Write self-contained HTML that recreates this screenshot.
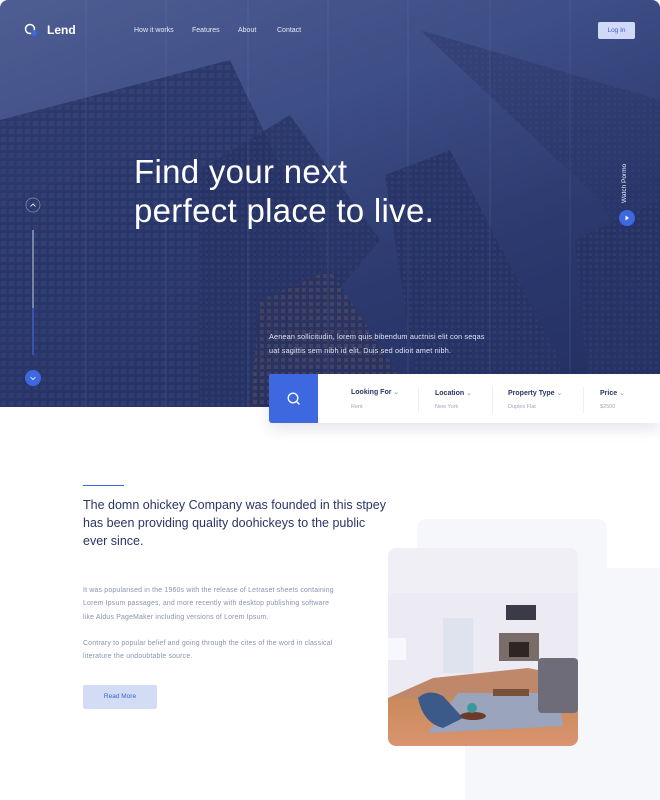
<!DOCTYPE html>
<html><head><meta charset="utf-8"><style>
*{margin:0;padding:0;box-sizing:border-box}
body{width:660px;height:800px;background:#fff;font-family:"Liberation Sans",sans-serif;position:relative;overflow:hidden}
.hero{position:absolute;left:0;top:0;width:660px;height:407px;background:linear-gradient(160deg,#5a6a9c 0%,#43538a 35%,#2c396c 65%,#1f2a58 100%);overflow:hidden;border-radius:8px 8px 0 0}
.abs{position:absolute}
.nav{color:#e6eaf7;font-size:7px;top:27px}
</style></head><body>
<div class="hero">
<svg class="abs" style="left:0;top:0" width="660" height="407">
<defs><pattern id="w" width="8" height="8" patternUnits="userSpaceOnUse"><rect width="8" height="8" fill="#26315f"/><rect x="1" y="1" width="5" height="5" fill="#303d70"/></pattern>
<pattern id="w2" width="6" height="6" patternUnits="userSpaceOnUse"><rect width="6" height="6" fill="#25305d"/><rect x="1" y="1" width="3" height="3" fill="#2f3c6e"/></pattern>
<pattern id="o" width="7" height="7" patternUnits="userSpaceOnUse"><rect width="7" height="7" fill="#2a2f55"/><rect x="1" y="1" width="4" height="4" fill="#5a4a5a"/></pattern></defs>
<polygon points="0,120 230,60 330,270 230,407 0,407" fill="url(#w)" opacity="0.85"/>
<polygon points="200,170 290,115 380,240 330,300 260,407 200,407" fill="url(#w2)" opacity="0.8"/>
<polygon points="385,175 450,150 560,360 560,407 420,407" fill="url(#w2)" opacity="0.85"/>
<polygon points="260,300 330,270 420,407 250,407" fill="url(#o)" opacity="0.7"/>
<polygon points="420,30 660,100 660,330 600,200" fill="url(#w2)" opacity="0.45"/>
<polygon points="575,240 660,200 660,407 590,407" fill="url(#w2)" opacity="0.8"/>
<rect width="660" height="407" fill="#2a3a78" opacity="0.25"/>
<g stroke="#8090c0" stroke-width="0.5" opacity="0.35"><line x1="166" y1="0" x2="166" y2="407"/><line x1="248" y1="0" x2="248" y2="407"/><line x1="328" y1="0" x2="328" y2="407"/><line x1="408" y1="0" x2="408" y2="407"/><line x1="490" y1="0" x2="490" y2="407"/><line x1="570" y1="0" x2="570" y2="407"/><line x1="86" y1="0" x2="86" y2="407"/></g>
<circle cx="30" cy="29" r="4.5" fill="none" stroke="#fff" stroke-width="1.5"/><circle cx="34" cy="33" r="3" fill="#3d68e0"/>
<circle cx="33" cy="205" r="7" fill="none" stroke="#7f8bb5" stroke-width="0.7"/><path d="M30.5 206.5 33 204 35.5 206.5" fill="none" stroke="#fff" stroke-width="0.8"/>
<line x1="33" y1="230" x2="33" y2="355" stroke="#c8cde0" stroke-width="1"/><line x1="33" y1="308" x2="33" y2="355" stroke="#3d68e0" stroke-width="1.2"/>
<circle cx="33" cy="378" r="8" fill="#3d68e0"/><path d="M30.5 377 33 379.5 35.5 377" fill="none" stroke="#fff" stroke-width="0.8"/>
<circle cx="627" cy="218" r="8" fill="#3d68e0"/><path d="M625.5 215.5 629 218 625.5 220.5Z" fill="#fff"/>
</svg>
<div class="abs" style="left:47px;top:23px;color:#fff;font-size:12px;font-weight:bold">Lend</div>
<div class="abs nav" style="left:134px">How it works</div>
<div class="abs nav" style="left:192px">Features</div>
<div class="abs nav" style="left:238px">About</div>
<div class="abs nav" style="left:277px">Contact</div>
<div class="abs" style="left:598px;top:22px;width:37px;height:17px;background:#d0d9f7;border-radius:2px;color:#3d5fd0;font-size:6.5px;text-align:center;line-height:17px">Log In</div>
<div class="abs" style="left:134px;top:152px;color:#fff;font-size:33px;line-height:39px;letter-spacing:0.3px">Find your next<br>perfect place to live.</div>
<div class="abs" style="left:621px;top:203px;color:#e6eaf7;font-size:6.5px;transform:rotate(-90deg);transform-origin:0 0;white-space:nowrap">Watch Pormo</div>
<div class="abs" style="left:269px;top:330px;color:#dfe3f2;font-size:7.3px;line-height:13.5px;letter-spacing:0.15px">Aenean sollicitudin, lorem quis bibendum auctnisi elit con seqas<br>uat sagittis sem nibh id elit. Duis sed odioit amet nibh.</div>
</div>
<div class="abs" style="left:269px;top:374px;width:391px;height:49px;background:#fff;box-shadow:0 6px 14px rgba(40,50,90,0.12);border-radius:3px 0 0 3px"></div>
<div class="abs" style="left:269px;top:374px;width:49px;height:49px;background:#3d68e0;border-radius:3px 0 0 3px"></div>
<svg class="abs" style="left:286px;top:391px" width="16" height="16"><circle cx="7" cy="7" r="4.8" fill="none" stroke="#fff" stroke-width="1.3"/><line x1="10.5" y1="10.5" x2="13.5" y2="13.5" stroke="#fff" stroke-width="1.3"/></svg>
<div class="abs" style="left:351px;top:388px;font-size:7px;color:#2a3566;font-weight:bold">Looking For <span style="color:#8a93b0;font-weight:normal">⌄</span></div>
<div class="abs" style="left:351px;top:404px;font-size:5.5px;color:#a0a7be">Rent</div>
<div class="abs" style="left:418px;top:387px;width:1px;height:26px;background:#eceef4"></div>
<div class="abs" style="left:435px;top:389px;font-size:7px;color:#2a3566;font-weight:bold">Location <span style="color:#8a93b0;font-weight:normal">⌄</span></div>
<div class="abs" style="left:435px;top:404px;font-size:5.5px;color:#a0a7be">New York</div>
<div class="abs" style="left:492px;top:387px;width:1px;height:26px;background:#eceef4"></div>
<div class="abs" style="left:508px;top:389px;font-size:7px;color:#2a3566;font-weight:bold">Property Type <span style="color:#8a93b0;font-weight:normal">⌄</span></div>
<div class="abs" style="left:508px;top:404px;font-size:5.5px;color:#a0a7be">Duplex Flat</div>
<div class="abs" style="left:583px;top:387px;width:1px;height:26px;background:#eceef4"></div>
<div class="abs" style="left:600px;top:389px;font-size:7px;color:#2a3566;font-weight:bold">Price <span style="color:#8a93b0;font-weight:normal">⌄</span></div>
<div class="abs" style="left:600px;top:404px;font-size:5.5px;color:#a0a7be">$2500</div>

<div class="abs" style="left:417px;top:519px;width:190px;height:120px;background:#f6f7fb;border-radius:10px 10px 0 0"></div>
<div class="abs" style="left:465px;top:568px;width:195px;height:232px;background:#f6f7fb;border-radius:40px 0 0 0"></div>
<svg class="abs" style="left:388px;top:548px;border-radius:8px" width="190" height="198">
<defs><linearGradient id="fl" x1="0" y1="0" x2="0" y2="1"><stop offset="0" stop-color="#c98a5a"/><stop offset="1" stop-color="#d99470"/></linearGradient></defs>
<rect width="190" height="198" fill="#eceaf2"/>
<rect y="0" width="190" height="45" fill="#f1eff6"/>
<rect x="0" y="150" width="190" height="48" fill="url(#fl)"/>
<polygon points="0,150 45,130 140,120 190,130 190,150" fill="#c0886a"/>
<rect x="55" y="70" width="30" height="55" fill="#dfe3ee"/>
<rect x="118" y="57" width="30" height="15" fill="#3a3a48"/>
<rect x="111" y="85" width="40" height="28" fill="#7a6c68"/>
<rect x="121" y="94" width="20" height="15" fill="#2e2622"/>
<polygon points="40,185 70,145 170,145 175,178" fill="#9aa4bd"/>
<path d="M30 150 Q40 140 55 148 L75 170 L55 180 Q35 175 30 150Z" fill="#3b5a8a"/>
<rect x="150" y="110" width="40" height="55" rx="4" fill="#6e6c78"/>
<rect x="105" y="141" width="36" height="7" fill="#7a5038"/>
<ellipse cx="85" cy="168" rx="13" ry="4" fill="#6a3a2a"/>
<circle cx="84" cy="160" r="5" fill="#3a9a9a"/>
<rect x="0" y="90" width="18" height="22" fill="#f6f8fb"/>
</svg>

<div class="abs" style="left:83px;top:485px;width:41px;height:1px;background:#3d68e0"></div>
<div class="abs" style="left:83px;top:496px;font-size:12.5px;line-height:18px;color:#2a3566">The domn ohickey Company was founded in this stpey<br>has been providing quality doohickeys to the public<br>ever since.</div>
<div class="abs" style="left:83px;top:584px;font-size:6.9px;line-height:13.3px;color:#8a93b0;letter-spacing:0.2px;white-space:nowrap"> It was popularised in the 1960s with the release of Letraset sheets containing<br>Lorem Ipsum passages, and more recently with desktop publishing software<br>like Aldus PageMaker including versions of Lorem Ipsum.</div>
<div class="abs" style="left:83px;top:637px;font-size:6.9px;line-height:13.3px;color:#8a93b0;letter-spacing:0.2px;white-space:nowrap">Contrary to popular belief and going through the cites of the word in classical<br>literature the undoubtable source.</div>
<div class="abs" style="left:83px;top:685px;width:74px;height:24px;background:#d3dcf5;border-radius:2px;color:#3d5fd0;font-size:6.5px;text-align:center;line-height:24px">Read More</div>
</body></html>
